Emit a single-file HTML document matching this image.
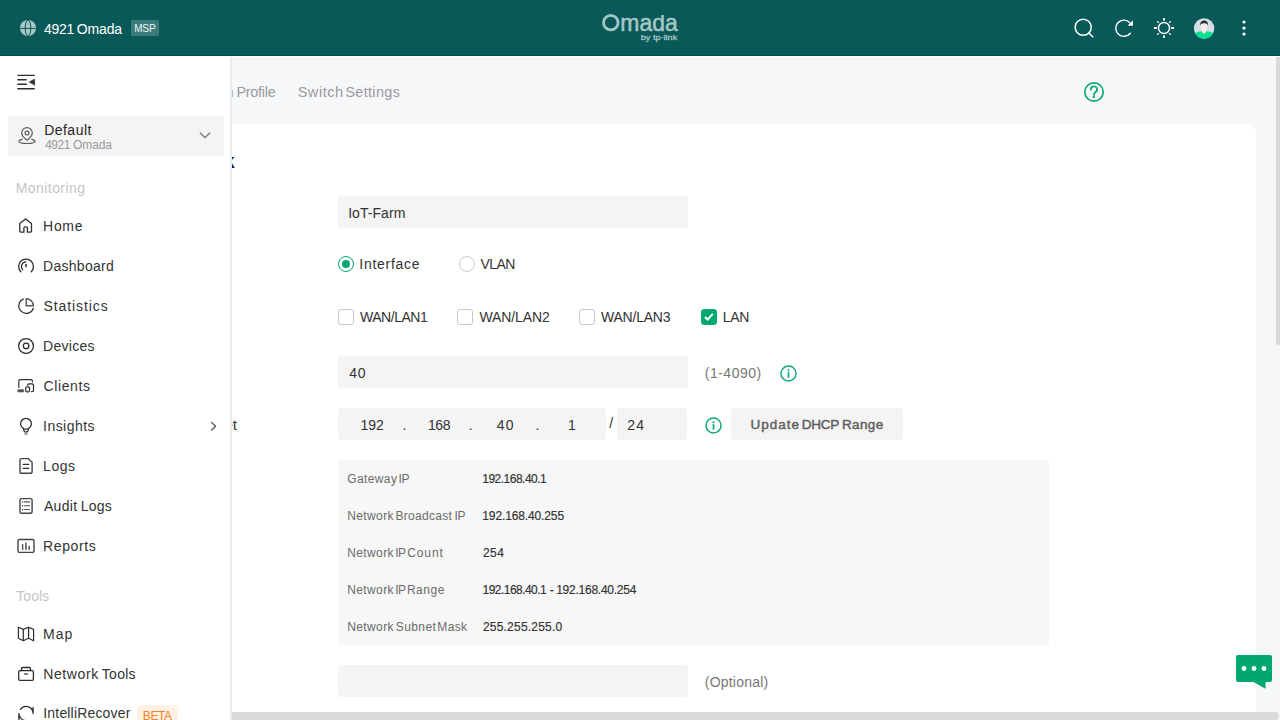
<!DOCTYPE html>
<html lang="en">
<head>
<meta charset="utf-8">
<title>Omada Controller - Edit Network</title>
<style>
*{box-sizing:border-box;margin:0;padding:0}
html,body{width:1280px;height:720px;overflow:hidden;background:#f6f7f9;font-family:"Liberation Sans",sans-serif;}
.t{position:absolute;white-space:pre;font-family:"Liberation Sans",sans-serif;}
.abs{position:absolute}
#header{position:absolute;left:0;top:0;width:1280px;height:57px;background:#0a5959;z-index:30;border-bottom:1px solid #fff}
#header::after{content:"";position:absolute;left:0;top:55px;width:1280px;height:1px;background:#004f50}
#main{position:absolute;left:0;top:56px;width:1280px;height:664px;background:#f6f7f9;z-index:1}
#main .t, #main .abs{margin-top:-56px}
#card{position:absolute;left:120px;top:123.8px;width:1135.6px;height:640px;background:#fff;border-radius:9px;margin-top:-56px}
#sidebar{position:absolute;left:0;top:56px;width:230px;height:664px;background:#fff;z-index:20;box-shadow:1px 0 0 #ececec,2px 0 0 #ececec;overflow:hidden}
#sidebar .t,#sidebar .abs{margin-top:-56px}
.inp{position:absolute;background:#f4f4f4;border-radius:4px}
.radio{position:absolute;width:16px;height:16px;border-radius:50%;border:1px solid #c9c9c9;background:#fff}
.radio.on{border-color:#00a870}
.radio.on::after{content:"";position:absolute;left:3px;top:3px;width:8px;height:8px;border-radius:50%;background:#00a870}
.cb{position:absolute;width:16px;height:16px;border-radius:3px;border:1px solid #c9c9c9;background:#fff}
.cb.on{border-color:#00a870;background:#00a870}
svg{position:absolute;overflow:visible}
</style>
</head>
<body>
<div id="main">
  <div id="card"></div>
  <!-- inputs -->
  <div class="inp abs" style="left:338px;top:196px;width:350px;height:32px"></div>
  <div class="radio on abs" style="left:338px;top:256px"></div>
  <div class="radio abs" style="left:459px;top:256px"></div>
  <div class="cb abs" style="left:338px;top:309px"></div>
  <div class="cb abs" style="left:457px;top:309px"></div>
  <div class="cb abs" style="left:579px;top:309px"></div>
  <div class="cb on abs" style="left:701px;top:309px"></div>
  <svg class="abs" style="left:701px;top:309px" width="16" height="16" viewBox="0 0 16 16"><path d="M4 8.1 L6.6 10.6 L11.8 4.9" fill="none" stroke="#fff" stroke-width="2.1" stroke-linecap="butt" stroke-linejoin="miter"/></svg>
  <div class="inp abs" style="left:338px;top:356px;width:350px;height:32px"></div>
  <div class="inp abs" style="left:338px;top:408px;width:268px;height:32px"></div>
  <div class="inp abs" style="left:617px;top:408px;width:70px;height:32px"></div>
  <div class="inp abs" style="left:731px;top:408px;width:172px;height:32px"></div>
  <div class="abs" style="left:338.2px;top:460.3px;width:711.3px;height:184.4px;background:#f7f7f7;border-radius:2px"></div>
  <div class="inp abs" style="left:338px;top:665px;width:350px;height:32px"></div>
  <!-- info icons -->
  <svg class="abs" style="left:779.6px;top:364.7px" width="17" height="17" viewBox="0 0 17 17"><circle cx="8.5" cy="8.5" r="7.55" fill="none" stroke="#10a874" stroke-width="1.45"/><circle cx="8.5" cy="5.2" r="1.05" fill="#10a874"/><path d="M8.5 7.7V12" stroke="#10a874" stroke-width="1.7" stroke-linecap="round"/></svg>
  <svg class="abs" style="left:704.6px;top:416.75px" width="17" height="17" viewBox="0 0 17 17"><circle cx="8.5" cy="8.5" r="7.55" fill="none" stroke="#10a874" stroke-width="1.45"/><circle cx="8.5" cy="5.2" r="1.05" fill="#10a874"/><path d="M8.5 7.7V12" stroke="#10a874" stroke-width="1.7" stroke-linecap="round"/></svg>
  <!-- help icon -->
  <svg class="abs" style="left:1084px;top:82px" width="20" height="20" viewBox="0 0 20 20"><circle cx="10" cy="10" r="9.2" fill="none" stroke="#10a874" stroke-width="1.7"/><path d="M6.95 7.5A3.05 3.05 0 1 1 11.6 10C10.4 10.75 9.9 11.3 9.9 12.9" fill="none" stroke="#10a874" stroke-width="1.8" stroke-linecap="round"/><circle cx="9.8" cy="15" r="1.2" fill="#10a874"/></svg>
<span class="t" style="right:1046.34px;top:84.73px;font-size:14.5px;line-height:14.5px;color:#a0a0a3;">Switch</span>
<span class="t" style="left:236.40px;top:84.73px;font-size:14.5px;line-height:14.5px;color:#9a9a9d;letter-spacing:-0.285px;">Profile</span>
<span class="t" style="left:297.65px;top:84.73px;font-size:14.5px;line-height:14.5px;color:#9a9a9d;letter-spacing:0.546px;">Switch</span>
<span class="t" style="left:345.30px;top:84.73px;font-size:14.5px;line-height:14.5px;color:#9a9a9d;letter-spacing:0.313px;">Settings</span>
<span class="t" style="right:1045.28px;top:150.57px;font-size:20px;line-height:20px;color:#0e1f3d;font-weight:700;">Edit Network</span>
<span class="t" style="right:1043.03px;top:417.30px;font-size:15px;line-height:15px;color:#333;">Gateway/Subnet</span>
<span class="t" style="left:138.00px;top:206.15px;font-size:14px;line-height:14px;color:#333;">Name</span>
<span class="t" style="left:138.00px;top:257.15px;font-size:14px;line-height:14px;color:#333;">Purpose</span>
<span class="t" style="left:130.00px;top:310.15px;font-size:14px;line-height:14px;color:#333;">LAN Interfaces</span>
<span class="t" style="left:138.00px;top:366.15px;font-size:14px;line-height:14px;color:#333;">VLAN</span>
<span class="t" style="left:130.00px;top:675.15px;font-size:14px;line-height:14px;color:#333;">Domain Name</span>
<span class="t" style="left:348.20px;top:206.15px;font-size:14px;line-height:14px;color:#333;letter-spacing:0.046px;">IoT-Farm</span>
<span class="t" style="left:359.30px;top:257.15px;font-size:14px;line-height:14px;color:#333;letter-spacing:0.714px;">Interface</span>
<span class="t" style="left:480.55px;top:257.15px;font-size:14px;line-height:14px;color:#333;letter-spacing:-0.593px;">VLAN</span>
<span class="t" style="left:360.00px;top:310.15px;font-size:14px;line-height:14px;color:#333;letter-spacing:-0.473px;">WAN/LAN1</span>
<span class="t" style="left:479.45px;top:310.15px;font-size:14px;line-height:14px;color:#333;letter-spacing:-0.109px;">WAN/LAN2</span>
<span class="t" style="left:601.00px;top:310.15px;font-size:14px;line-height:14px;color:#333;letter-spacing:-0.223px;">WAN/LAN3</span>
<span class="t" style="left:722.70px;top:310.15px;font-size:14px;line-height:14px;color:#333;letter-spacing:-0.317px;">LAN</span>
<span class="t" style="left:349.25px;top:366.15px;font-size:14px;line-height:14px;color:#333;letter-spacing:0.672px;">40</span>
<span class="t" style="left:704.75px;top:366.15px;font-size:14px;line-height:14px;color:#777;letter-spacing:0.497px;opacity:0.999;">(1-4090)</span>
<span class="t" style="left:360.40px;top:418.15px;font-size:14px;line-height:14px;color:#333;">192</span>
<span class="t" style="left:402.50px;top:418.15px;font-size:14px;line-height:14px;color:#333;">.</span>
<span class="t" style="left:427.90px;top:418.15px;font-size:14px;line-height:14px;color:#333;letter-spacing:-0.380px;">168</span>
<span class="t" style="left:468.80px;top:418.15px;font-size:14px;line-height:14px;color:#333;">.</span>
<span class="t" style="left:496.75px;top:418.15px;font-size:14px;line-height:14px;color:#333;letter-spacing:1.172px;">40</span>
<span class="t" style="left:535.50px;top:418.15px;font-size:14px;line-height:14px;color:#333;">.</span>
<span class="t" style="left:568.00px;top:418.15px;font-size:14px;line-height:14px;color:#333;">1</span>
<span class="t" style="left:609.30px;top:415.75px;font-size:14px;line-height:14px;color:#333;">/</span>
<span class="t" style="left:627.25px;top:418.15px;font-size:14px;line-height:14px;color:#333;letter-spacing:1.322px;">24</span>
<span class="t" style="left:750.50px;top:417.77px;font-size:13.5px;line-height:13.5px;color:#5e5e5e;letter-spacing:0.991px;-webkit-text-stroke:0.45px #5e5e5e;">Update</span>
<span class="t" style="left:801.75px;top:417.77px;font-size:13.5px;line-height:13.5px;color:#5e5e5e;letter-spacing:-0.255px;-webkit-text-stroke:0.45px #5e5e5e;">DHCP</span>
<span class="t" style="left:842.00px;top:417.77px;font-size:13.5px;line-height:13.5px;color:#5e5e5e;letter-spacing:0.351px;-webkit-text-stroke:0.45px #5e5e5e;">Range</span>
<span class="t" style="left:347.15px;top:472.94px;font-size:12px;line-height:12px;color:#6b6b6b;letter-spacing:0.407px;">Gateway</span>
<span class="t" style="left:398.45px;top:472.94px;font-size:12px;line-height:12px;color:#6b6b6b;letter-spacing:-0.294px;">IP</span>
<span class="t" style="left:347.15px;top:509.94px;font-size:12px;line-height:12px;color:#6b6b6b;letter-spacing:0.406px;">Network</span>
<span class="t" style="left:395.50px;top:509.94px;font-size:12px;line-height:12px;color:#6b6b6b;letter-spacing:0.302px;">Broadcast</span>
<span class="t" style="left:454.55px;top:509.94px;font-size:12px;line-height:12px;color:#6b6b6b;letter-spacing:-0.394px;">IP</span>
<span class="t" style="left:347.15px;top:546.94px;font-size:12px;line-height:12px;color:#6b6b6b;letter-spacing:0.397px;">Network</span>
<span class="t" style="left:395.25px;top:546.94px;font-size:12px;line-height:12px;color:#6b6b6b;letter-spacing:-0.694px;">IP</span>
<span class="t" style="left:407.15px;top:546.94px;font-size:12px;line-height:12px;color:#6b6b6b;letter-spacing:0.930px;">Count</span>
<span class="t" style="left:347.15px;top:583.94px;font-size:12px;line-height:12px;color:#6b6b6b;letter-spacing:0.397px;">Network</span>
<span class="t" style="left:395.25px;top:583.94px;font-size:12px;line-height:12px;color:#6b6b6b;letter-spacing:-0.694px;">IP</span>
<span class="t" style="left:406.90px;top:583.94px;font-size:12px;line-height:12px;color:#6b6b6b;letter-spacing:0.544px;">Range</span>
<span class="t" style="left:347.15px;top:620.94px;font-size:12px;line-height:12px;color:#6b6b6b;letter-spacing:0.397px;">Network</span>
<span class="t" style="left:395.75px;top:620.94px;font-size:12px;line-height:12px;color:#6b6b6b;letter-spacing:0.421px;">Subnet</span>
<span class="t" style="left:437.35px;top:620.94px;font-size:12px;line-height:12px;color:#6b6b6b;letter-spacing:0.343px;">Mask</span>
<span class="t" style="left:482.30px;top:472.94px;font-size:12px;line-height:12px;color:#333;letter-spacing:-0.516px;-webkit-text-stroke:0.18px #333;">192.168.40.1</span>
<span class="t" style="left:482.30px;top:509.94px;font-size:12px;line-height:12px;color:#333;letter-spacing:-0.125px;-webkit-text-stroke:0.18px #333;">192.168.40.255</span>
<span class="t" style="left:482.90px;top:546.94px;font-size:12px;line-height:12px;color:#333;letter-spacing:0.459px;-webkit-text-stroke:0.18px #333;">254</span>
<span class="t" style="left:482.60px;top:583.94px;font-size:12px;line-height:12px;color:#333;letter-spacing:-0.548px;-webkit-text-stroke:0.18px #333;">192.168.40.1</span>
<span class="t" style="left:549.75px;top:583.94px;font-size:12px;line-height:12px;color:#333;letter-spacing:0.100px;-webkit-text-stroke:0.18px #333;">-</span>
<span class="t" style="left:556.20px;top:583.94px;font-size:12px;line-height:12px;color:#333;letter-spacing:-0.248px;-webkit-text-stroke:0.18px #333;">192.168.40.254</span>
<span class="t" style="left:482.90px;top:620.94px;font-size:12px;line-height:12px;color:#333;letter-spacing:0.217px;-webkit-text-stroke:0.18px #333;">255.255.255.0</span>
<span class="t" style="left:704.75px;top:675.15px;font-size:14px;line-height:14px;color:#777;letter-spacing:0.220px;opacity:0.999;">(Optional)</span>
  <!-- scrollbars -->
  <div class="abs" style="left:1276px;top:57px;width:4px;height:287.6px;background:#d9d9d9;border-radius:0 0 0 3px"></div>
  <div class="abs" style="left:232px;top:712px;width:1047px;height:8px;background:#dadada;border-radius:0 4px 4px 0"></div>
  <!-- chat -->
  <svg class="abs" style="left:1236px;top:655px" width="36" height="34" viewBox="0 0 36 34"><path d="M2 0H34a2 2 0 0 1 2 2V25a2 2 0 0 1 -2 2H29.5V33.8L17.5 27H2a2 2 0 0 1 -2 -2V2a2 2 0 0 1 2 -2Z" fill="#00a870"/><circle cx="8" cy="13.5" r="2.4" fill="#fff"/><circle cx="18" cy="13.5" r="2.4" fill="#fff"/><circle cx="28" cy="13.5" r="2.4" fill="#fff"/></svg>
</div>
<div id="sidebar">
  <div class="abs" style="left:8px;top:116px;width:216px;height:40px;background:#f4f4f4;border-radius:4px"></div>
  <div class="abs" style="left:137.3px;top:705px;width:40.5px;height:24px;background:#fff1e6;border-radius:3px"></div>
  <svg class="abs" style="left:0;top:0" width="230" height="720" viewBox="0 0 230 720" fill="none" stroke="#2e2e2e" stroke-width="1.3" stroke-linecap="round" stroke-linejoin="round">
    <!-- collapse -->
    <g stroke-width="1.35"><path d="M17.8 75.3H34.3M17.8 79.7H26.3M17.8 84.2H26.3M17.8 88.7H34.3"/></g>
    <path d="M29.4 81.9L34.6 79V85Z" fill="#2e2e2e" stroke="#2e2e2e" stroke-width="0.6"/>
    <!-- site pin -->
    <g stroke="#5a5a5a" stroke-width="1.2">
      <path d="M27 140.2C27 140.2 21.7 136.4 21.7 132.9A5.3 5.3 0 0 1 32.3 132.9C32.3 136.4 27 140.2 27 140.2Z"/>
      <circle cx="27" cy="133.1" r="1.9"/>
      <path d="M22.2 139.3C20.2 139.7 18.9 140.5 18.9 141.3C18.9 142.6 22.5 143.5 27 143.5S35.1 142.6 35.1 141.3C35.1 140.5 33.8 139.7 31.8 139.3"/>
    </g>
    <path d="M200.3 133L205 137.7L209.7 133" stroke="#7a7a7a" stroke-width="1.3"/>
    <!-- home -->
    <path d="M19.8 223.6L25.6 219L31.5 223.6V231A1.2 1.2 0 0 1 30.3 232.2H27.4V228.1A1.2 1.2 0 0 0 26.2 226.9H25.1A1.2 1.2 0 0 0 23.9 228.1V232.2H21A1.2 1.2 0 0 1 19.8 231Z"/>
    <!-- dashboard -->
    <path d="M20.8 271.7A7.4 7.4 0 1 1 31.3 271.7"/>
    <path d="M22.7 269.8A4.7 4.7 0 0 1 25.9 261.9" stroke-width="1.2"/>
    <path d="M26 264.4V266.7" stroke-width="1.5"/>
    <!-- statistics -->
    <path d="M23.4 299.1A7.4 7.4 0 1 0 33.3 308.2" stroke-width="1.2"/>
    <path d="M26.2 298.7V305.8H33.4A7.2 7.2 0 0 0 26.2 298.7Z" stroke="#555" stroke-width="1.4"/>
    <!-- devices -->
    <circle cx="26.05" cy="346" r="7.4"/>
    <circle cx="26.1" cy="345.9" r="2.75"/>
    <!-- clients -->
    <g stroke-width="1.2">
      <path d="M18.8 387.5V380.9A1.2 1.2 0 0 1 20 379.7H31.2A1.2 1.2 0 0 1 32.4 380.9V381.8"/>
      <path d="M17.3 390.8L18.7 389.5H23.7V392.1H18.7Z" fill="#555" stroke="#555" stroke-width="0.5"/>
      <path d="M27.6 385.2A1.3 1.3 0 0 1 28.9 383.9H32.2A1.3 1.3 0 0 1 33.5 385.2V390.3A1.3 1.3 0 0 1 32.2 391.6H31.5"/>
      <rect x="25.7" y="386.8" width="3.8" height="5" rx="1.3"/>
    </g>
    <!-- insights -->
    <path d="M23.3 428.4A5.4 5.4 0 1 1 28.7 428.4"/>
    <path d="M23.3 428.4L24.4 431.9H27.6L28.7 428.4M23.6 429.2H28.4" stroke-width="1.2"/>
    <path d="M24.4 433.9H27.6" stroke="#8a8a8a" stroke-width="1.6" stroke-linecap="butt"/>
    <path d="M211.6 422.4L215.6 426.2L211.6 430" stroke="#555" stroke-width="1.3"/>
    <!-- logs -->
    <path d="M21.4 458.6H28.1L32.1 462.3V471.9A1.4 1.4 0 0 1 30.7 473.3H21.4A1.4 1.4 0 0 1 20 471.9V460A1.4 1.4 0 0 1 21.4 458.6Z" stroke="#444" stroke-width="1.4"/>
    <path d="M23.2 464.4H28.8M23.2 468.4H28.8" stroke-width="1.2"/>
    <!-- audit logs -->
    <rect x="20" y="498.6" width="12.1" height="14.7" rx="1.5" stroke="#444" stroke-width="1.4"/>
    <path d="M24.4 501.9H29.5M24.4 505.7H29.5M24.4 509.5H29.5" stroke-width="1.1" stroke="#555"/>
    <path d="M22.6 501.9h0.01M22.6 505.7h0.01M22.6 509.5h0.01" stroke-width="1.3"/>
    <!-- reports -->
    <rect x="18" y="539.5" width="16" height="12.9" rx="1.5" stroke="#444" stroke-width="1.4"/>
    <path d="M22.6 544.6V549.4M25.9 543V549.4M29.2 546.6V549.4" stroke="#555" stroke-width="1.5"/>
    <!-- map -->
    <path d="M18.4 627.2L23.3 629.4L28.6 627.2L33.6 629.4V640.7L28.6 638.3L23.3 640.7L18.4 638.3ZM23.3 629.4V640.7M28.6 627.2V638.3" stroke-width="1.2"/>
    <!-- network tools -->
    <rect x="18.7" y="670.7" width="14.7" height="9.7" rx="1.3"/>
    <path d="M21.5 670.7V668.7A1.2 1.2 0 0 1 22.7 667.5H29.3A1.2 1.2 0 0 1 30.5 668.7V670.7"/>
    <path d="M24.6 673.9H27.5" stroke="#555" stroke-width="1.5"/>
    <!-- intellirecover -->
    <path d="M20.4 709.4A6.9 6.9 0 0 1 33 712.6M33.1 707.5V713.4" stroke-width="1.3"/>
    <path d="M18.9 713.6V720M19.2 714.6A6.9 6.9 0 0 0 26 720.6" stroke-width="1.3"/>
  </svg>

<span class="t" style="left:44.15px;top:122.95px;font-size:14px;line-height:14px;color:#262626;letter-spacing:0.482px;">Default</span>
<span class="t" style="left:45.15px;top:138.64px;font-size:12px;line-height:12px;color:#999;letter-spacing:-0.468px;">4921</span>
<span class="t" style="left:73.05px;top:138.64px;font-size:12px;line-height:12px;color:#999;letter-spacing:-0.090px;">Omada</span>
<span class="t" style="left:15.70px;top:181.35px;font-size:14px;line-height:14px;color:#c4c4c4;letter-spacing:0.442px;">Monitoring</span>
<span class="t" style="left:43.10px;top:219.15px;font-size:14px;line-height:14px;color:#333;letter-spacing:0.680px;">Home</span>
<span class="t" style="left:43.10px;top:259.15px;font-size:14px;line-height:14px;color:#333;letter-spacing:0.269px;">Dashboard</span>
<span class="t" style="left:43.60px;top:299.15px;font-size:14px;line-height:14px;color:#333;letter-spacing:0.893px;">Statistics</span>
<span class="t" style="left:43.10px;top:339.15px;font-size:14px;line-height:14px;color:#333;letter-spacing:0.267px;">Devices</span>
<span class="t" style="left:43.60px;top:379.15px;font-size:14px;line-height:14px;color:#333;letter-spacing:0.601px;">Clients</span>
<span class="t" style="left:43.10px;top:419.15px;font-size:14px;line-height:14px;color:#333;letter-spacing:0.450px;">Insights</span>
<span class="t" style="left:43.10px;top:459.15px;font-size:14px;line-height:14px;color:#333;letter-spacing:0.514px;">Logs</span>
<span class="t" style="left:43.95px;top:499.15px;font-size:14px;line-height:14px;color:#333;letter-spacing:0.295px;">Audit</span>
<span class="t" style="left:80.65px;top:499.15px;font-size:14px;line-height:14px;color:#333;letter-spacing:0.247px;">Logs</span>
<span class="t" style="left:43.10px;top:539.15px;font-size:14px;line-height:14px;color:#333;letter-spacing:0.586px;">Reports</span>
<span class="t" style="left:16.35px;top:589.15px;font-size:14px;line-height:14px;color:#c4c4c4;">Tools</span>
<span class="t" style="left:43.10px;top:627.15px;font-size:14px;line-height:14px;color:#333;letter-spacing:1.033px;">Map</span>
<span class="t" style="left:43.20px;top:666.85px;font-size:14px;line-height:14px;color:#333;letter-spacing:0.615px;">Network</span>
<span class="t" style="left:101.80px;top:666.85px;font-size:14px;line-height:14px;color:#333;letter-spacing:0.278px;">Tools</span>
<span class="t" style="left:43.30px;top:705.95px;font-size:14px;line-height:14px;color:#333;letter-spacing:0.171px;">IntelliRecover</span>
<span class="t" style="left:142.85px;top:710.14px;font-size:12px;line-height:12px;color:#f5821f;letter-spacing:-0.451px;opacity:0.999;">BETA</span>
</div>
<div id="header">
  <div class="abs" style="left:131px;top:20px;width:28px;height:16px;background:#3b7b7b;border-radius:2px"></div>
  <svg class="abs" style="left:0;top:0" width="1280" height="56" viewBox="0 0 1280 56" fill="none" stroke="#fff" stroke-width="1.45" stroke-linecap="round" stroke-linejoin="round">
    <!-- globe -->
    <circle cx="28" cy="28.05" r="8.1" fill="#a6c6c5" stroke="none"/>
    <path d="M19.9 28.4H36.1" stroke="#0a5959" stroke-width="1"/>
    <ellipse cx="28" cy="28.05" rx="2.8" ry="8" stroke="#0a5959" stroke-width="1"/>
    <!-- logo -->
    <circle cx="610.8" cy="22.6" r="7.3" stroke="#a6c6c5" stroke-width="2.8"/>
    <clipPath id="lg"><rect x="600" y="15" width="90" height="20"/></clipPath>
    <text clip-path="url(#lg)" x="620.3" y="30.85" font-family="Liberation Sans, sans-serif" font-weight="400" font-size="23" fill="#a6c6c5" stroke="#a6c6c5" stroke-width="0.5" textLength="57.4" lengthAdjust="spacingAndGlyphs">mada</text>
    <text x="640.7" y="40" font-family="Liberation Sans, sans-serif" font-weight="400" font-size="8" fill="#a6c6c5" stroke="#a6c6c5" stroke-width="0.3" textLength="36.6" lengthAdjust="spacingAndGlyphs">by tp·link</text>
    <!-- search -->
    <circle cx="1083.2" cy="27.2" r="8.05"/>
    <path d="M1088.9 33L1092.8 36.8"/>
    <!-- refresh -->
    <path d="M1130.3 33.2A8.1 8.1 0 1 1 1129.6 22.5"/>
    <path d="M1133 20.3V25.8H1127.5Z" fill="#fff" stroke="none"/>
    <!-- sun -->
    <circle cx="1164" cy="28" r="5.5" stroke-width="1.4"/>
    <path d="M1164 18.2V20.6M1164 35.4V37.8M1154 28H1156.8M1171.2 28H1174" stroke-width="2" stroke-linecap="butt"/>
    <path d="M1157.2 21.2L1158.7 22.7M1170.8 21.2L1169.3 22.7M1157.2 34.8L1158.7 33.3M1170.8 34.8L1169.3 33.3" stroke-width="1.4" stroke-linecap="butt" stroke="#e3eded"/>
    <!-- avatar -->
    <clipPath id="av"><circle cx="1204.1" cy="28.5" r="10.2"/></clipPath>
    <g clip-path="url(#av)" stroke="none">
      <rect x="1193" y="18" width="23" height="22" fill="#d5dde6"/>
      <path d="M1193 40V34.5C1196 32.2 1199.5 31.4 1201.3 31.2L1204.1 34L1206.9 31.2C1208.7 31.4 1212.2 32.2 1215.2 34.5V40Z" fill="#00e08f"/>
      <path d="M1202.3 29.5H1205.9V31.6L1204.1 33.9L1202.3 31.6Z" fill="#f7ecea"/>
      <rect x="1200.9" y="22.3" width="6.6" height="8.6" rx="3.1" fill="#f7ecea"/>
      <path d="M1200.3 25.3C1199.8 21.8 1202 20.4 1204.2 20.4C1206.6 20.4 1208.5 22 1207.9 25.8C1207.3 24 1206.3 23.3 1204.5 23.3C1202.6 23.3 1201 23.8 1200.3 25.3Z" fill="#2b343d"/>
    </g>
    <!-- kebab -->
    <g fill="#fff" stroke="none"><circle cx="1244" cy="22" r="1.6"/><circle cx="1244" cy="28.1" r="1.6"/><circle cx="1244" cy="34.1" r="1.6"/></g>
  </svg>

<span class="t" style="left:44.10px;top:22.15px;font-size:14px;line-height:14px;color:#fff;letter-spacing:-0.319px;">4921</span>
<span class="t" style="left:76.65px;top:22.15px;font-size:14px;line-height:14px;color:#fff;letter-spacing:-0.105px;">Omada</span>
<span class="t" style="left:134.15px;top:23.93px;font-size:10px;line-height:10px;color:#eef4f4;letter-spacing:-0.111px;opacity:0.999;">MSP</span>
</div>
</body>
</html>
